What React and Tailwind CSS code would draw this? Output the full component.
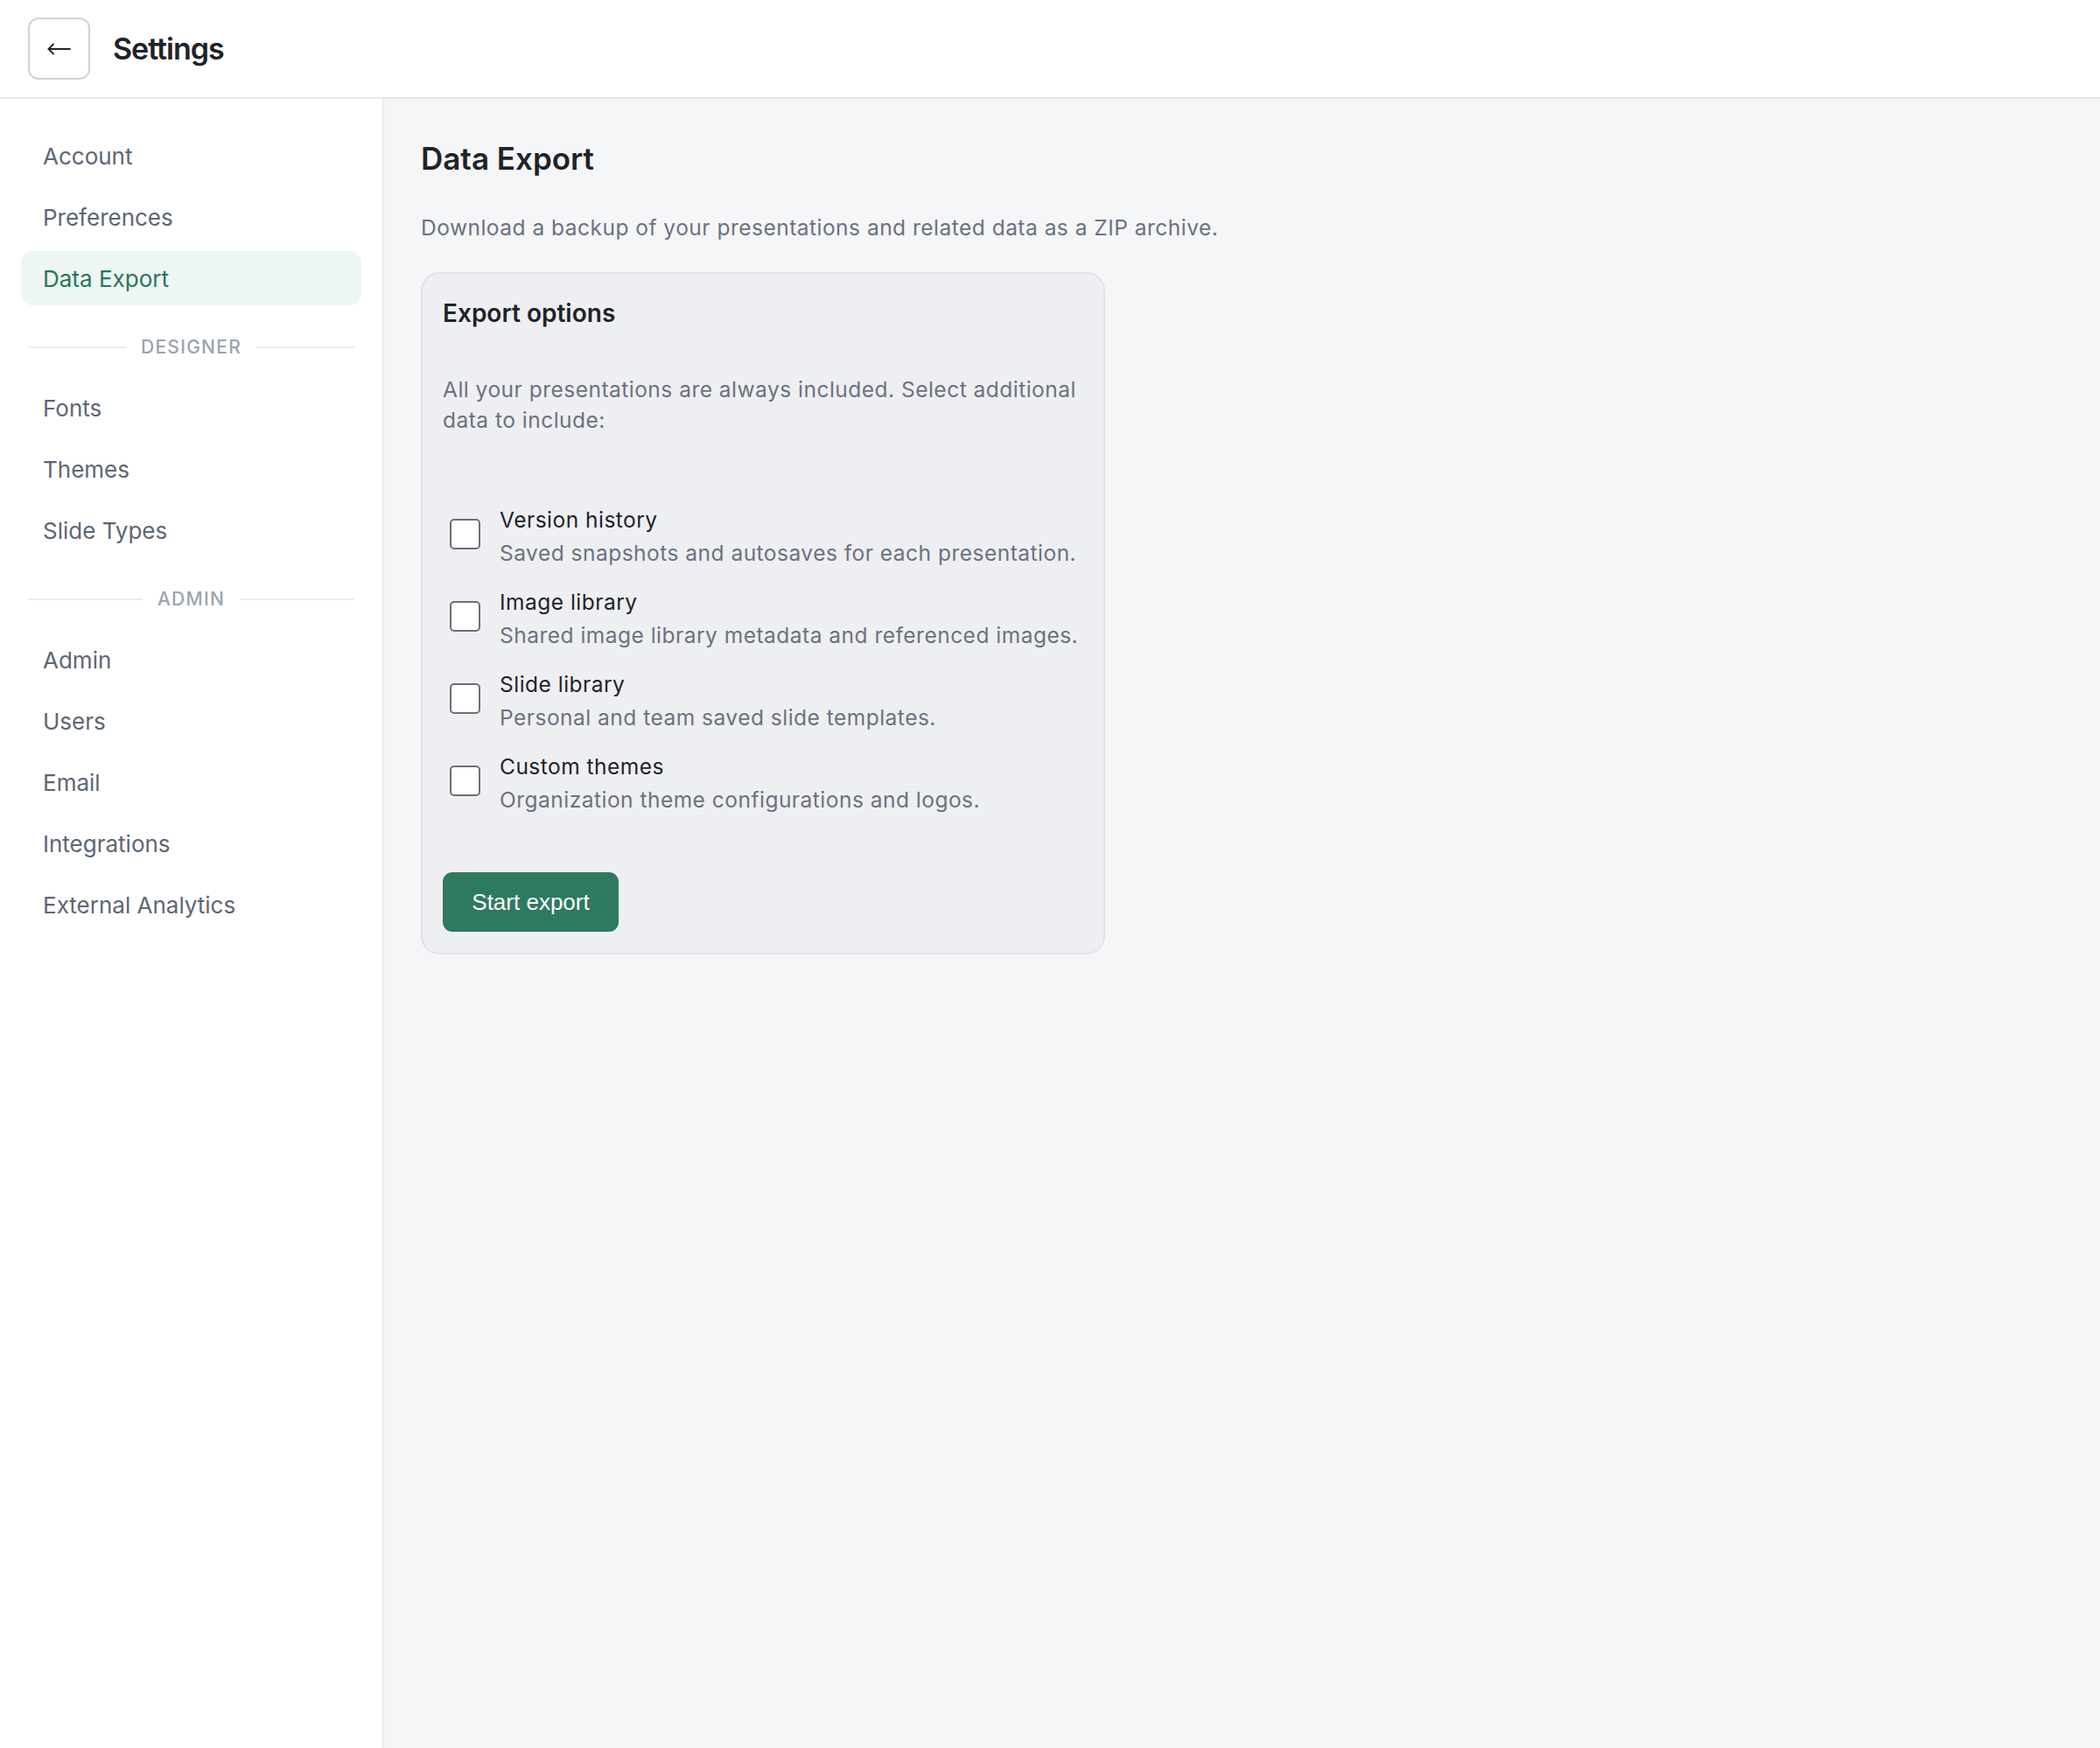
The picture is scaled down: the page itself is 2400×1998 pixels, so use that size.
import { useState } from "react"

const NAV_TOP = ["Account", "Preferences", "Data Export"]
const NAV_DESIGNER = ["Fonts", "Themes", "Slide Types"]
const NAV_ADMIN = ["Admin", "Users", "Email", "Integrations", "External Analytics"]

const OPTIONS = [
  { key: "versions", title: "Version history", desc: "Saved snapshots and autosaves for each presentation." },
  { key: "images", title: "Image library", desc: "Shared image library metadata and referenced images." },
  { key: "slides", title: "Slide library", desc: "Personal and team saved slide templates." },
  { key: "themes", title: "Custom themes", desc: "Organization theme configurations and logos." },
]

function NavItem({ label, active }) {
  return (
    <div
      className={
        active
          ? "flex h-[62px] items-center rounded-[14px] bg-[#edf6f2] px-[25px] text-[26px] text-[#2a7656]"
          : "flex h-[62px] items-center rounded-[14px] px-[25px] text-[26px] text-[#5d6675]"
      }
    >
      {label}
    </div>
  )
}

function NavDivider({ label }) {
  return (
    <div className="px-[8px] pt-[29px] pb-[20px]">
      <div className="flex h-[21px] items-center gap-[17px]">
        <div className="h-[2px] flex-1 bg-[#ebecf0]" />
        <span className="text-[21px] font-medium uppercase leading-none tracking-[0.06em] text-[#9ca3af]">
          {label}
        </span>
        <div className="h-[2px] flex-1 bg-[#ebecf0]" />
      </div>
    </div>
  )
}

export default function App() {
  const [checked, setChecked] = useState({})

  return (
    <div className="flex min-h-screen flex-col bg-[#f5f6f8] font-['Inter','Noto_Sans',sans-serif]">

      {/* Top bar */}
      <header className="flex h-[113px] items-center gap-[26px] border-b-2 border-[#e4e6ea] bg-white pl-[32px]">
        <button
          type="button"
          className="flex h-[71px] w-[71px] items-center justify-center rounded-[12px] border-2 border-[#cdd2dc] bg-white text-[#1f2329]"
        >
          <svg width="27" height="14" viewBox="0 0 27 14" fill="none" stroke="currentColor" strokeWidth="1.8" strokeLinecap="round" strokeLinejoin="round">
            <path d="M26 7H1.5" />
            <path d="M7 1.5L1.5 7L7 12.5" />
          </svg>
        </button>
        <h1 className="text-[34px] font-semibold tracking-[-0.03em] text-[#1f2329]">Settings</h1>
      </header>

      <div className="flex flex-1">

        {/* Sidebar */}
        <aside className="w-[439px] shrink-0 border-r-2 border-[#eaecef] bg-white px-[24px] pt-[34px]">
          <nav className="flex flex-col gap-[8px]">
            {NAV_TOP.map((l) => (
              <NavItem key={l} label={l} active={l === "Data Export"} />
            ))}
            <NavDivider label="Designer" />
            {NAV_DESIGNER.map((l) => (
              <NavItem key={l} label={l} />
            ))}
            <NavDivider label="Admin" />
            {NAV_ADMIN.map((l) => (
              <NavItem key={l} label={l} />
            ))}
          </nav>
        </aside>

        {/* Content */}
        <main className="flex-1 pl-[42px] pt-[44px]">
          <h2 className="text-[35px] font-semibold leading-[49px] text-[#1f2329]">Data Export</h2>
          <p className="mt-[37px] text-[24.5px] leading-[35px] tracking-[0.02em] text-[#6b7280]">
            Download a backup of your presentations and related data as a ZIP archive.
          </p>

          <div className="mt-[33px] w-[782px] rounded-[21px] border-2 border-[#e1e3e7] bg-[#eeeff2] px-[23px] pt-[24px] pb-[24px]">
            <h3 className="text-[28px] font-semibold leading-[42px] text-[#1f2329]">Export options</h3>
            <p className="mt-[49px] text-[24.5px] leading-[35px] tracking-[0.02em] text-[#6b7280]">
              All your presentations are always included. Select additional data to include:
            </p>

            <div className="mt-[79px] flex flex-col gap-[21px]">
              {OPTIONS.map((o) => (
                <label key={o.key} className="flex items-start gap-[22px]">
                  <input
                    type="checkbox"
                    checked={!!checked[o.key]}
                    onChange={() => setChecked((c) => ({ ...c, [o.key]: !c[o.key] }))}
                    className="ml-[8px] mt-[16px] h-[35px] w-[35px] shrink-0 appearance-none rounded-[5px] border-[2.5px] border-[#6e6f73] bg-white checked:bg-[#2e7a5f]"
                  />
                  <div>
                    <div className="text-[24.5px] leading-[35px] tracking-[0.02em] text-[#1f2329]">{o.title}</div>
                    <div className="mt-[3px] text-[24.5px] leading-[35px] tracking-[0.02em] text-[#6b7280]">{o.desc}</div>
                  </div>
                </label>
              ))}
            </div>

            <button
              type="button"
              className="mt-[65px] flex h-[68px] w-[201px] items-center justify-center rounded-[11px] bg-[#2e7a5f] font-['Liberation_Sans','Arial',sans-serif] text-[26px] text-white"
            >
              Start export
            </button>
          </div>
        </main>
      </div>
    </div>
  )
}
